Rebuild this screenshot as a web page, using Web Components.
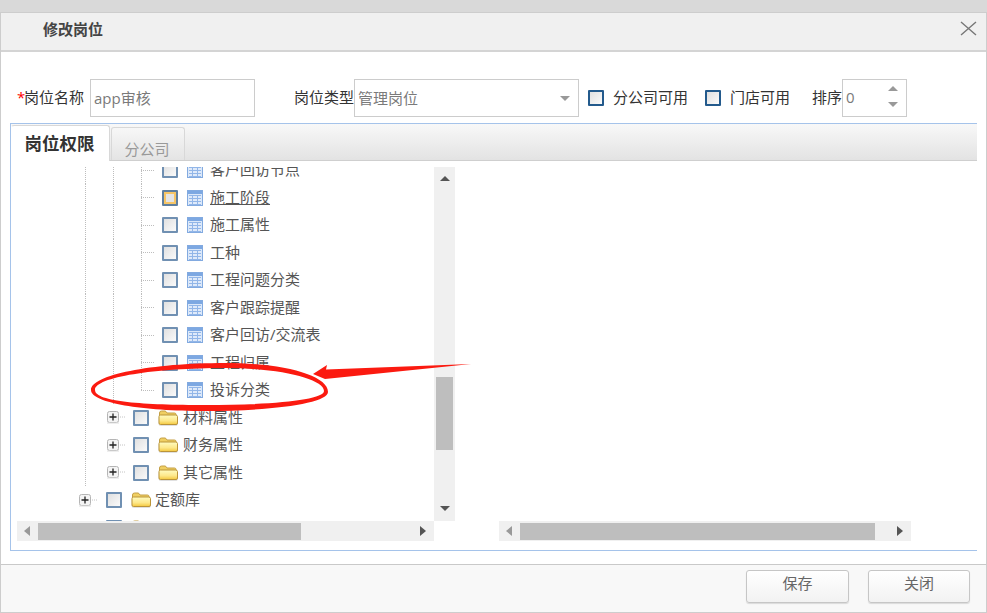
<!DOCTYPE html>
<html lang="zh"><head><meta charset="utf-8"><title>修改岗位</title>
<style>
html,body{margin:0;padding:0;height:613px;overflow:hidden;background:#d9d9d9;font:15px "Open Sans","Noto Sans CJK SC",sans-serif;color:#333}
</style></head><body>
<x-dialog heading="修改岗位">
  <x-form-row>
    <x-label req>岗位名称</x-label>
    <x-field style="margin-left:6px;width:165px">app审核</x-field>
    <x-label style="margin-left:39px">岗位类型</x-label>
    <x-field arrow style="width:225px">管理岗位</x-field>
    <x-check dark style="margin-left:9px"></x-check>
    <x-label style="margin-left:9px">分公司可用</x-label>
    <x-check dark style="margin-left:17px"></x-check>
    <x-label style="margin-left:9px">门店可用</x-label>
    <x-label style="margin-left:22px">排序</x-label>
    <x-field spin style="width:65px">0</x-field>
  </x-form-row>
  <x-tabs>
    <x-tree-pane>
      <x-tree-row level="2" kind="table">客户回访节点</x-tree-row>
      <x-tree-row level="2" kind="table" hover>施工阶段</x-tree-row>
      <x-tree-row level="2" kind="table">施工属性</x-tree-row>
      <x-tree-row level="2" kind="table">工种</x-tree-row>
      <x-tree-row level="2" kind="table">工程问题分类</x-tree-row>
      <x-tree-row level="2" kind="table">客户跟踪提醒</x-tree-row>
      <x-tree-row level="2" kind="table">客户回访/交流表</x-tree-row>
      <x-tree-row level="2" kind="table">工程归属</x-tree-row>
      <x-tree-row level="2" kind="table" last>投诉分类</x-tree-row>
      <x-tree-row level="1" kind="folder">材料属性</x-tree-row>
      <x-tree-row level="1" kind="folder">财务属性</x-tree-row>
      <x-tree-row level="1" kind="folder">其它属性</x-tree-row>
      <x-tree-row level="0" kind="folder">定额库</x-tree-row>
      <x-tree-row level="0" kind="folder"></x-tree-row>
    </x-tree-pane>
    <x-hbar style="width:412px;margin-top:354px" thumb-start="21" thumb-width="355"></x-hbar>
  </x-tabs>
  <x-button slot="footer" style="width:103px">保存</x-button>
  <x-button slot="footer">关闭</x-button>
</x-dialog>
<x-annotation></x-annotation>
<script>
function shadow(el, html){ el.attachShadow({mode:'open'}).innerHTML = html; }
const TRI = {
  up:'<svg width="10" height="5" viewBox="0 0 10 5"><path d="M5 0 L10 5 H0Z" fill="currentColor"/></svg>',
  down:'<svg width="10" height="5" viewBox="0 0 10 5"><path d="M0 0 H10 L5 5Z" fill="currentColor"/></svg>',
  left:'<svg width="6" height="10" viewBox="0 0 6 10"><path d="M6 0 V10 L0 5Z" fill="currentColor"/></svg>',
  right:'<svg width="6" height="10" viewBox="0 0 6 10"><path d="M0 0 L6 5 L0 10Z" fill="currentColor"/></svg>'
};
customElements.define('x-dialog', class extends HTMLElement{
  constructor(){super();
    shadow(this,`<style>
      :host{display:flex;flex-direction:column;box-sizing:border-box;margin-top:12px;height:601px;width:987px;background:#fff;border:1px solid #cdcdcd}
      header{display:flex;align-items:center;justify-content:space-between;height:37px;box-sizing:border-box;background:#f0f0f0;padding:0 9px 0 42px;flex:none}
      h1{margin:0;font-size:15px;font-weight:700;color:#444;position:relative;top:-3px}
      .rule{height:2px;background:#d4d4d4;flex:none}
      main{flex:1;min-height:0;padding:27px 0 0 9px;display:flex;flex-direction:column}
      footer{flex:none;height:48px;box-sizing:border-box;background:#f8f8f8;border-top:1px solid #c9c9c9;display:flex;justify-content:flex-end;gap:19px;padding:5px 16px 0 0}
      svg{display:block;position:relative;top:-3px}
    </style>
    <header><h1></h1>
      <svg width="17" height="15" viewBox="0 0 17 15"><path d="M1 1 L16 14 M16 1 L1 14" stroke="#777" stroke-width="1.4" fill="none"/></svg>
    </header><div class="rule"></div>
    <main><slot></slot></main>
    <footer><slot name="footer"></slot></footer>`);
    this.shadowRoot.querySelector('h1').textContent=this.getAttribute('heading');
  }
});
customElements.define('x-form-row', class extends HTMLElement{
  constructor(){super();shadow(this,`<style>:host{display:flex;align-items:center;height:38px;margin-bottom:6px;flex:none;padding-left:7px}</style><slot></slot>`);}
});
customElements.define('x-label', class extends HTMLElement{
  constructor(){super();
    const r=this.hasAttribute('req');
    shadow(this,`<style>:host{display:inline-flex;flex:none;font-size:15px;color:#333;line-height:20px;position:relative;top:-1px;white-space:nowrap}b{color:#f00;font-weight:400;width:7px;display:inline-block}</style>${r?'<b>*</b>':''}<slot></slot>`);}
});
customElements.define('x-field', class extends HTMLElement{
  constructor(){super();
    const deco=this.hasAttribute('arrow')?`<i class="a">${TRI.down}</i>`:this.hasAttribute('spin')?`<i class="s">${TRI.up}${TRI.down}</i>`:'';
    shadow(this,`<style>
      :host{display:flex;align-items:center;justify-content:space-between;box-sizing:border-box;height:38px;border:1px solid #ccc;background:#fff;padding:0 8px 0 3px;flex:none;color:#7a7a7a;font-size:15px}
      span{position:relative;top:-1px}
      i{display:flex;color:#999}
      .a{position:relative;top:0}
      .s{flex-direction:column;gap:11px;position:relative;top:-2px}
      svg{display:block}
    </style><span><slot></slot></span>${deco}`);}
});
customElements.define('x-check', class extends HTMLElement{
  constructor(){super();
    shadow(this,`<style>
      :host{display:block;flex:none;box-sizing:border-box;width:16px;height:16px;border:2px solid #7090b2;border-radius:1px;background:linear-gradient(135deg,#e0e0e0,#fafafa)}
      :host([dark]){border-color:#235a8c}
      :host([hover]){background:#e4e4e4;box-shadow:inset 0 0 0 2px #f6c566;border-color:#5f7f9f}
    </style>`);}
});
customElements.define('x-tabs', class extends HTMLElement{
  constructor(){super();
    shadow(this,`<style>
      :host{display:flex;flex-direction:column;box-sizing:border-box;width:967px;height:428px;flex:none;border:solid #a5c3ea;border-width:1px 0 1px 1px}
      .head{display:flex;align-items:flex-end;box-sizing:border-box;height:37px;padding-top:1px;background:linear-gradient(#f8f8f8,#e3e3e3);border-bottom:1px solid #cfcfcf;flex:none}
      .tab{box-sizing:border-box;display:flex;justify-content:center;border:1px solid #d8d8d8;border-bottom:0;border-radius:3px 3px 0 0}
      .on{width:99px;height:36px;margin-bottom:-1px;background:#fff;font-size:17.5px;font-weight:700;color:#333;align-items:center;position:relative;padding:0 2px 3px 0;border-left-color:#fff}
      .off{width:74px;height:33px;margin-left:1px;background:linear-gradient(#f7f7f7,#e4e4e4);color:#999;font-size:15px;align-items:flex-end;padding:0 2px 1px 0}
      .content{flex:1;min-height:0;display:flex;align-items:flex-start;gap:44px;padding:6px 0 0 6px}
    </style>
    <div class="head"><div class="tab on">岗位权限</div><div class="tab off">分公司</div></div>
    <div class="content"><slot></slot></div>`);}
});
customElements.define('x-tree-pane', class extends HTMLElement{
  constructor(){super();
    shadow(this,`<style>
      :host{display:grid;grid-template-columns:417px 21px;grid-template-rows:354px 20px;flex:none}
      .view{overflow:hidden;background:#fff;grid-column:1;grid-row:1}
      .inner{margin-top:-10.5px;display:flex;flex-direction:column}
      x-vbar{grid-column:2;grid-row:1}
      x-hbar{grid-column:1;grid-row:2}
    </style>
    <div class="view"><div class="inner"><slot></slot></div></div>
    <x-vbar></x-vbar>
    <x-hbar thumb-start="21" thumb-width="263"></x-hbar>`);}
});
customElements.define('x-vbar', class extends HTMLElement{
  constructor(){super();
    shadow(this,`<style>
      :host{display:flex;flex-direction:column;align-items:center;background:#f0f0f0;height:354px;color:#555}
      .t{height:73px;width:17px;background:#bebebe;margin-top:196px}
      i{display:flex;flex:none}
      .u{margin-top:9px}.d{margin-top:56px}
      svg{display:block}
    </style><i class="u">${TRI.up}</i><div class="t"></div><i class="d">${TRI.down}</i>`);}
});
customElements.define('x-hbar', class extends HTMLElement{
  constructor(){super();
    const s=this.getAttribute('thumb-start'),w=this.getAttribute('thumb-width');
    shadow(this,`<style>
      :host{display:block;box-sizing:border-box;height:20px;background:#f0f0f0;flex:none}
      .t{height:17px;margin-top:2px;background:#bebebe;flex:none}
      i{display:flex;flex:none;position:absolute}
      .wrap{position:relative;display:flex;align-items:flex-start;width:100%;height:100%}
      .l{color:#999;left:7px;top:5px}.r{color:#555;right:8px;top:5px}
      svg{display:block}
    </style><div class="wrap"><i class="l">${TRI.left}</i><div class="t" style="margin-left:${s}px;width:${w}px"></div><i class="r">${TRI.right}</i></div>`);}
});
const STUB='repeating-linear-gradient(to right,#bdbdbd 0 1px,transparent 1px 2px)';
const VERT='repeating-linear-gradient(to bottom,#bdbdbd 0 1px,transparent 1px 2px)';
customElements.define('x-tree-row', class extends HTMLElement{
  constructor(){super();
    const lvl=+this.getAttribute('level'),kind=this.getAttribute('kind');
    const v='<div class="c v"></div>';
    const exp=`<div class="c e"><svg width="28" height="13" viewBox="0 0 28 13"><rect x="8.5" y=".5" width="11" height="11" rx="2" fill="#f4f4f4" stroke="#b5b5b5"/><rect x="8" y="11.500" width="12" height="1" fill="#ddd"/><path d="M10.500 6H17.500M14 2.500V9.500" stroke="#222" stroke-width="1.3"/><path d="M21 6h1M23 6h1M25 6h1" stroke="#c4c4c4"/></svg></div>`;
    let cells='';
    if(lvl===2) cells=v+v+`<div class="c ${this.hasAttribute('last')?'bl':'b'}"></div>`;
    if(lvl===1) cells=v+exp;
    if(lvl===0) cells=exp;
    const table=`<svg class="ic" width="16" height="16" viewBox="0 0 16 16"><rect x=".5" y=".5" width="15" height="15" fill="#dbe8f9" stroke="#82aae0"/><rect x="1" y="1" width="14" height="3" fill="#7da8e2"/><path d="M2 5.500H14M2 8.500H14M2 11.500H14M2 14.500H14M5.500 5V14M10.500 5V14" stroke="#92b6e8"/><path d="M2 6h3v2H2zM6 6h4v2H6zM11 6h3v2h-3zM2 9h3v2H2zM6 9h4v2H6zM11 9h3v2h-3zM2 12h3v2H2zM6 12h4v2H6zM11 12h3v2h-3z" fill="#dfeafa"/></svg>`;
    const folder=`<svg class="ic f" width="20" height="16" viewBox="0 0 20 16"><defs><linearGradient id="g" x1="0" y1="0" x2="0" y2="1"><stop offset="0" stop-color="#fffcc0"/><stop offset=".6" stop-color="#fde88a"/><stop offset="1" stop-color="#f4c83e"/></linearGradient></defs><path d="M1.500 5V3Q1.500 1 3.500 1H7Q8 1 9 3H16.500Q18 3 18 4.500V6H1.500Z" fill="#f0cf62" stroke="#c49f45"/><path d="M1 6.500Q1 5 2.500 5H17.500Q19.500 5 19.500 6.500V13Q19.500 14.500 18 14.500H2.500Q1 14.500 1 13Z" fill="url(#g)" stroke="#bb9438"/></svg>`;
    const indentGap = lvl===1?6:7;
    const iconGap = kind==='table'?7:(lvl===0?4:5);
    shadow(this,`<style>
      :host{display:flex;align-items:center;height:27.5px;padding-left:54px;flex:none;color:#555;font-size:15px;white-space:nowrap}
      .c{width:28px;flex:none;align-self:stretch}
      .v{background:${VERT} 14px 0/1px 100% no-repeat}
      .b{background:${VERT} 14px 0/1px 100% no-repeat,${STUB} 14px 50%/14px 1px no-repeat}
      .bl{background:${VERT} 14px 0/1px 50% no-repeat,${STUB} 14px 50%/14px 1px no-repeat}
      .e{display:flex;align-items:center}
      svg{display:block;flex:none}
      x-check{margin-left:${indentGap}px}
      .ic{margin-left:9px}
      .f{filter:drop-shadow(0 1px 0 rgba(0,0,0,.12))}
      .t{margin-left:${iconGap}px;line-height:20px;position:relative;top:-1px}
      :host([hover]) .t{text-decoration:underline}
    </style>${cells}<x-check ${this.hasAttribute('hover')?'hover':''}></x-check>${kind==='table'?table:folder}<span class="t"><slot></slot></span>`);}
});
customElements.define('x-button', class extends HTMLElement{
  constructor(){super();
    shadow(this,`<style>
      :host{display:flex;align-items:center;justify-content:center;box-sizing:border-box;width:102px;height:33px;border:1px solid #c6c6c6;border-radius:3px;background:linear-gradient(#fff,#f2f2f2);box-shadow:0 1px 1px rgba(0,0,0,.12);color:#666;font-size:15px;padding-bottom:8px}
    </style><slot></slot>`);}
});
customElements.define('x-annotation', class extends HTMLElement{
  constructor(){super();
    shadow(this,`<style>:host{position:absolute;left:0;top:0;width:987px;height:613px;pointer-events:none}svg{display:block}</style>
    <svg width="987" height="613" viewBox="0 0 987 613">
      <path fill="#fb1a10" fill-rule="evenodd" d="M91 390 C91 375 151 363 225 363 C282 363 328 375 328 392 C328 403 274 411 205 411 C143 411 91 403 91 390Z
        M95 390 C95 402 145 405 205 405 C272 405 324 400 324 391 C324 379 280 368 225 368 C155 368 95 377 95 390Z"/>
      <path fill="#fb1a10" d="M471 364 L326 369.500 L327 365 L313 374 L325 379Z"/>
    </svg>`);}
});
</script>
</body></html>
